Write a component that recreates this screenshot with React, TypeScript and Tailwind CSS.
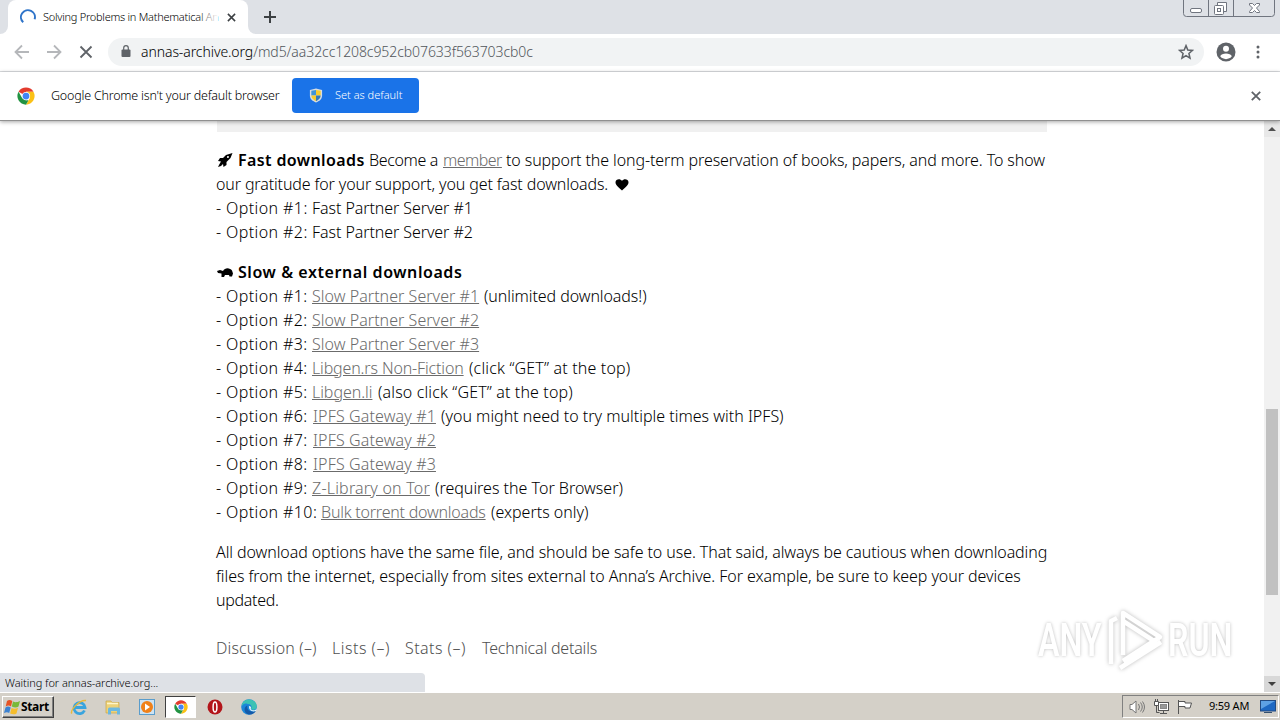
import React from "react";

interface DownloadOption {
  label: string;
  link: string;
  note?: string;
  labelClass: string;
  linkClass: string;
  noteClass?: string;
}

const slowOptions: DownloadOption[] = [
  { label: "- Option #1:", link: "Slow Partner Server #1", note: "(unlimited downloads!)", labelClass: "w-24", linkClass: "w-[167px] tracking-[0.04px]", noteClass: "tracking-[-0.08px]" },
  { label: "- Option #2:", link: "Slow Partner Server #2", labelClass: "w-24", linkClass: "w-[167px] tracking-[0.04px]" },
  { label: "- Option #3:", link: "Slow Partner Server #3", labelClass: "w-24", linkClass: "w-[167px] tracking-[0.04px]" },
  { label: "- Option #4:", link: "Libgen.rs Non-Fiction", note: "(click “GET” at the top)", labelClass: "w-24", linkClass: "w-[152px] tracking-[-0.15px]", noteClass: "tracking-[0.17px]" },
  { label: "- Option #5:", link: "Libgen.li", note: "(also click “GET” at the top)", labelClass: "w-24", linkClass: "w-[61px] tracking-[-0.05px]", noteClass: "tracking-[0.14px]" },
  { label: "- Option #6:", link: "IPFS Gateway #1", note: "(you might need to try multiple times with IPFS)", labelClass: "w-[97px]", linkClass: "w-[123px] tracking-[0.13px]" },
  { label: "- Option #7:", link: "IPFS Gateway #2", labelClass: "w-[97px]", linkClass: "w-[123px] tracking-[0.13px]" },
  { label: "- Option #8:", link: "IPFS Gateway #3", labelClass: "w-[97px]", linkClass: "w-[123px] tracking-[0.13px]" },
  { label: "- Option #9:", link: "Z-Library on Tor", note: "(requires the Tor Browser)", labelClass: "w-24", linkClass: "w-[118px] tracking-[0.2px]" },
  { label: "- Option #10:", link: "Bulk torrent downloads", note: "(experts only)", labelClass: "w-[105px]", linkClass: "w-[165px] tracking-[-0.22px]" },
];

const fastOptions = ["1", "2"];

function ChromeLogo({ className }: { className: string }) {
  return (
    <svg viewBox="0 0 48 48" className={className}>
      <circle cx="24" cy="24" r="23" fill="#fff" />
      <path d="M24 24 4.1 12.5A23 23 0 0 1 43.9 12.5H24Z" fill="#e33b2e" />
      <path d="M24 12.5h19.9A23 23 0 0 1 24 47l10-17.300Z" fill="#fbc116" />
      <path d="M4.100 12.500 14 29.700 24 35.500h6.600L24 47A23 23 0 0 1 4.100 12.500Z" fill="#229342" />
      <circle cx="24" cy="24" r="11" fill="#fff" />
      <circle cx="24" cy="24" r="9" fill="#4285f4" />
    </svg>
  );
}

function TabStrip() {
  return (
    <div className="flex h-[34px] items-start bg-[#dee1e6]">
      <div className="h-[34px] w-2 bg-white">
        <div className="h-full w-full rounded-br-lg bg-[#dee1e6]" />
      </div>
      <div className="flex h-[34px] w-[240px] items-center rounded-t-lg bg-white pl-3">
        <svg viewBox="0 0 16 16" className="h-4 w-4 shrink-0" fill="none">
          <path d="M3.200 13.300A7 7 0 1 1 14.600 10.300" stroke="#2f74c9" strokeWidth="2" />
        </svg>
        <div className="relative ml-[7px] flex w-[175px] text-[11px] tracking-[-0.26px] whitespace-nowrap text-black">
          Solving Problems in Mathematical An
          <div className="absolute inset-y-0 right-0 w-5 bg-gradient-to-r from-transparent to-white" />
        </div>
        <svg viewBox="0 0 10 10" className="ml-[9px] h-[9px] w-[9px]" stroke="#3c4043" strokeWidth="1.700">
          <path d="m1 1 8 8M9 1 1 9" />
        </svg>
      </div>
      <div className="h-[34px] w-2 bg-white">
        <div className="h-full w-full rounded-bl-lg bg-[#dee1e6]" />
      </div>
      <svg viewBox="0 0 12 12" className="mt-[11px] ml-2 h-3 w-3" stroke="#3c4043" strokeWidth="2">
        <path d="M6 0v12M0 6h12" />
      </svg>
      <svg viewBox="0 0 94 18" className="ml-auto mr-1 h-[18px] w-[94px]" fill="none" stroke="#70757f">
        <path d="M1.500 0v13.500a3 3 0 0 0 3 3h85a3 3 0 0 0 3-3V0M26.500 0v16M51.500 0v16" />
        <rect x="8.500" y="8.500" width="11" height="4" rx="1.500" fill="#fff" />
        <path d="M35.500 5.500v-3h9v9h-3" fill="#fff" />
        <rect x="32.500" y="5.500" width="9" height="9" rx="1" fill="#fff" />
        <rect x="35.500" y="8.500" width="3" height="3" />
        <path d="M67.500 3.500h3l2 2 2-2h3v1.500L74.500 8l3 3.500v1h-3l-2-2-2 2h-3v-1l3-3.500-3-3Z" fill="#fff" />
      </svg>
    </div>
  );
}

function Toolbar() {
  return (
    <div className="flex h-[38px] items-center border-b border-[#dcdee1] bg-white pb-0.5">
      <svg viewBox="0 0 16 16" className="ml-[14px] h-4 w-4" fill="none" stroke="#b5b7ba" strokeWidth="1.800">
        <path d="M15 8H2M8 1.500 1.500 8 8 14.500" />
      </svg>
      <svg viewBox="0 0 16 16" className="ml-4 h-4 w-4" fill="none" stroke="#b5b7ba" strokeWidth="1.800">
        <path d="M1 8h13M8 1.500 14.500 8 8 14.500" />
      </svg>
      <svg viewBox="0 0 14 14" className="ml-[17px] h-[14px] w-[14px]" stroke="#5f6368" strokeWidth="1.800">
        <path d="m1.500 1.500 11 11M12.500 1.500l-11 11" />
      </svg>
      <div className="ml-[15px] flex h-7 w-[1096px] items-center rounded-full bg-[#f1f3f4] pr-[10px] pl-[13px]">
        <svg viewBox="0 0 10 13" className="h-[13px] w-[10px]">
          <rect x="0.500" y="4.500" width="9" height="7.500" rx="1" fill="#5f6368" />
          <path d="M2.700 5V3a2.300 2.300 0 0 1 4.600 0v2" fill="none" stroke="#5f6368" strokeWidth="1.200" />
        </svg>
        <div className="ml-[10px] text-[14px] leading-5 tracking-[-0.08px] whitespace-nowrap text-[#50555a]">
          <span className="text-black">annas-archive.org</span>/md5/aa32cc1208c952cb07633f563703cb0c
        </div>
        <svg viewBox="0 0 24 24" className="ml-auto h-4 w-4" fill="none" stroke="#5f6368" strokeWidth="2.300">
          <path d="m12 2.500 2.700 6.500 7 .6-5.300 4.600 1.600 6.900-6-3.700-6 3.700 1.600-6.900L2.300 9.600l7-.6Z" />
        </svg>
      </div>
      <svg viewBox="0 0 20 20" className="ml-3 h-5 w-5">
        <circle cx="10" cy="10" r="9.500" fill="#5f6368" />
        <circle cx="10" cy="6.800" r="3" fill="#fff" />
        <path d="M4.200 14.200c1.200-3.600 10.400-3.600 11.600 0a7.200 7.200 0 0 1-11.600 0Z" fill="#fff" />
      </svg>
      <svg viewBox="0 0 4 14" className="ml-5 h-[14px] w-1" fill="#5f6368">
        <circle cx="2" cy="2" r="1.500" />
        <circle cx="2" cy="7" r="1.500" />
        <circle cx="2" cy="12" r="1.500" />
      </svg>
    </div>
  );
}

function DefaultBrowserBar() {
  return (
    <div className="relative z-10 flex h-[49px] items-center border-b border-[#909090] bg-white pb-px shadow-[0_1px_4px_rgba(0,0,0,0.35)]">
      <ChromeLogo className="ml-[17px] h-[18px] w-[18px]" />
      <span className="ml-4 w-[241px] pt-px text-[12.500px] tracking-[-0.21px] whitespace-nowrap text-black">
        Google Chrome isn't your default browser
      </span>
      <button className="flex h-[35px] w-[127px] items-center rounded-[4px] bg-[#1a73e8] pl-[17px] text-[11px] whitespace-nowrap text-white">
        <svg viewBox="0 0 14 16" className="h-[15px] w-[14px]">
          <path d="M7 .5 13.500 2v6c0 4-3 6-6.500 7.500C3.500 14 .5 12 .5 8V2Z" fill="#d7dde2" />
          <path d="M7 2v6H2V3Z" fill="#3f94d9" />
          <path d="M7 2v6h5V3Z" fill="#f7cb2d" />
          <path d="M2 8h5v6C4 12.500 2 11 2 8Z" fill="#f7cb2d" />
          <path d="M12 8H7v6c3-1.500 5-3 5-6Z" fill="#3479b8" />
        </svg>
        <span className="ml-3">Set as default</span>
      </button>
      <svg viewBox="0 0 10 10" className="ml-auto mr-[19px] h-[10px] w-[10px]" stroke="#5f6368" strokeWidth="1.800">
        <path d="m.8.8 8.400 8.400M9.200.8.8 9.200" />
      </svg>
    </div>
  );
}

function Watermark() {
  return (
    <div className="absolute top-[483px] left-[1038px] flex h-[72px] w-[200px] items-center font-['Roboto'] text-[46px] font-semibold text-white [text-shadow:0_0_4px_#bbb]">
      <span className="w-[66px] origin-left scale-x-[.7]">ANY</span>
      <svg viewBox="0 0 62 66" className="h-[66px] w-[62px] shrink-0 overflow-visible drop-shadow-[0_0_2px_#bbb]" fill="none" stroke="#fff" strokeWidth="4.500" strokeLinejoin="round">
        <path d="M19 48V6l37 24-37 24M13 11l-6 3v43M16 61l41-26M19 14l31 20" />
      </svg>
      <span className="ml-0.5 origin-left scale-x-[.7]">RUN</span>
    </div>
  );
}

function PageContent() {
  return (
    <div className="relative flex h-[571px] overflow-hidden bg-white">
      <main className="w-[1264px] pl-[216px] text-[16px] leading-6 whitespace-nowrap text-black">
        <div className="ml-px h-[11px] w-[830px] bg-[#f0f0f0]" />
        <div className="mt-4">
          <div className="flex items-center">
            <svg viewBox="0 0 16 16" className="mr-[5px] ml-px h-4 w-4" fill="#000">
              <path d="M15.500 1 9 3 6 6H3L1 9l3 .5L2.500 12 1 15l3-1 2-2 .5 3 3-2v-3l4-4ZM11 4a1 1 0 1 1-.1 2A1 1 0 0 1 11 4Z" fillRule="evenodd" />
            </svg>
            <b className="w-[131px] font-semibold tracking-[0.39px]">Fast downloads</b>
            <span className="w-[74px] tracking-[-0.35px]">Become a</span>
            <a className="w-[59px] tracking-[-0.55px] text-[#6b6b6b] underline">member</a>
            <span className="ml-1 tracking-[-0.1px]">to support the long-term preservation of books, papers, and more. To show</span>
          </div>
          <div className="flex items-center">
            <span className="w-[398px] tracking-[-0.13px]">our gratitude for your support, you get fast downloads.</span>
            <svg viewBox="0 0 16 14" className="h-[13px] w-4" fill="#000">
              <path d="M8 13.500C5 10 1 8 1 4.500 1 1 6 0 8 3c2-3 7-2 7 1.500C15 8 11 10 8 13.500Z" />
            </svg>
          </div>
          {fastOptions.map((n) => (
            <div key={n} className="flex">
              <span className="w-24 tracking-[0.4px]">- Option #{n}:</span>
              <span className="tracking-[-0.08px]">Fast Partner Server #{n}</span>
            </div>
          ))}
        </div>
        <div className="mt-4">
          <div className="flex items-center">
            <svg viewBox="0 0 16 12" className="mr-[5px] ml-px h-3 w-4" fill="#000">
              <path d="M0 5 3 4l3 1c2-4 7-3.500 9-.5l1 3-1 3h-2.500L12 9H8l-1 2H4.500V7.500L1 7Z" />
            </svg>
            <b className="font-semibold tracking-[0.57px]">Slow &amp; external downloads</b>
          </div>
          {slowOptions.map((option) => (
            <div key={option.label} className="flex">
              <span className={`${option.labelClass} tracking-[0.4px]`}>{option.label}</span>
              <a className={`${option.linkClass} text-[#6b6b6b] underline`}>{option.link}</a>
              {option.note && <span className={`ml-[5px] ${option.noteClass ?? ""}`}>{option.note}</span>}
            </div>
          ))}
        </div>
        <div className="mt-4">
          <div className="tracking-[-0.085px]">All download options have the same file, and should be safe to use. That said, always be cautious when downloading</div>
          <div className="tracking-[-0.075px]">files from the internet, especially from sites external to Anna’s Archive. For example, be sure to keep your devices</div>
          <div className="tracking-[-0.3px]">updated.</div>
        </div>
        <div className="mt-6 flex text-[#505050]">
          <span className="w-[116px] tracking-[0.15px]">Discussion (–)</span>
          <span className="w-[73px] tracking-[0.5px]">Lists (–)</span>
          <span className="w-[77px] tracking-[0.45px]">Stats (–)</span>
          <span className="tracking-[-0.18px]">Technical details</span>
        </div>
      </main>
      <div className="flex w-4 flex-col items-center bg-[#f1f1f1]">
        <svg viewBox="0 0 16 16" className="h-4 w-4 bg-[#e8e8e8]">
          <path d="m4 10 4-4 4 4Z" fill="#505050" />
        </svg>
        <div className="mt-[272px] h-[186px] w-3 bg-[#c1c1c1]" />
        <svg viewBox="0 0 16 16" className="mt-auto h-4 w-4 bg-[#d8d8d8]">
          <path d="m4 6 4 4 4-4Z" fill="#404040" />
        </svg>
      </div>
      <Watermark />
      <div className="absolute bottom-0 left-0 h-[19px] w-[425px] rounded-tr-[4px] bg-[#dee1e6] pl-[5px] text-[11px] leading-[19px] tracking-[-0.05px] text-black">
        Waiting for annas-archive.org...
      </div>
    </div>
  );
}

function Taskbar() {
  return (
    <div className="flex h-7 items-center border-t border-white bg-[#d4d0c8]">
      <button className="ml-[2px] flex h-[22px] w-[52px] items-center border border-t-white border-r-[#404040] border-b-[#404040] border-l-white pl-px text-[12px] font-bold text-black shadow-[inset_-1px_-1px_#808080]">
        <svg viewBox="0 0 16 16" className="mr-px h-4 w-4 shrink-0">
          <path d="M3 2c2-1.500 3.500-1 5.300 0L7 7.500c-1.500-1-3-1.500-5.300 0Z" fill="#e65324" />
          <path d="M9 2.500c2 1 4 1 7-.5l-1.500 5.500c-2 1.500-4.500 1-6.700 0Z" fill="#79b938" />
          <path d="M1.500 8.500c2-1.500 3.500-1 5.200 0L5.200 14c-1.500-1-3-1-5.200 0Z" fill="#3c82d1" />
          <path d="M7.600 9c2 1 4 1 6.400-.2L12.500 14.500c-2 1.200-4 1-6.400 0Z" fill="#f5bd2c" />
        </svg>
        <span className="tracking-[-0.030em]">Start</span>
      </button>
      <svg viewBox="0 0 18 18" className="ml-4 h-[18px] w-[18px]" fill="none">
        <path d="M14.500 12.500A5.500 5.500 0 1 1 15 9.500H5" stroke="#39a4de" strokeWidth="2.800" />
        <path d="M2 15.500c-3-2 7-14 14-13" stroke="#e8b93a" strokeWidth="1.400" />
      </svg>
      <svg viewBox="0 0 18 18" className="ml-4 h-[18px] w-[18px]">
        <path d="M2 3h5l1 1.500h7V15H2Z" fill="#edd279" stroke="#c9a849" strokeWidth=".7" />
        <path d="M3 5.500h11" stroke="#fff6c9" strokeWidth="1.500" />
        <path d="M4 16.500V11q0-1.500 1.500-1.500h9q1.500 0 1.500 1.500v5.500h-3V13H7v3.500Z" fill="#6cb8e0" />
      </svg>
      <svg viewBox="0 0 16 16" className="ml-[17px] h-4 w-4">
        <rect x=".5" y=".5" width="15" height="15" fill="#cde3f3" stroke="#5a9dcc" />
        <circle cx="8" cy="8" r="6" fill="#f08119" />
        <path d="m6 4.500 5 3.500-5 3.500Z" fill="#fff" />
      </svg>
      <div className="ml-[10px] flex h-[22px] w-[31px] items-center justify-center border border-t-[#404040] border-r-white border-b-white border-l-[#404040] bg-white">
        <ChromeLogo className="h-[14px] w-[14px]" />
      </div>
      <svg viewBox="0 0 16 16" className="ml-[11px] h-4 w-4">
        <circle cx="8" cy="8" r="7.500" fill="#b3151a" />
        <ellipse cx="8" cy="8" rx="1.900" ry="5" fill="#b3151a" stroke="#fff" strokeWidth="1.500" />
      </svg>
      <svg viewBox="0 0 16 16" className="ml-[18px] h-4 w-4">
        <circle cx="8" cy="8" r="7.800" fill="#1b86d8" />
        <path d="M1 5C4-2 16-.5 15.800 8c-.8 3-4 3.500-6 2 2-2 0-5.500-3-5C4 4 2 5 1 7Z" fill="#3cc2b4" />
        <path d="M6.500 6.500c-1 3 1 6 5 6 1.500 0 3-.5 3.500-1-2 4-7 5.500-10 2.500-2.500-2.500-1.500-7 1.500-7.500Z" fill="#1459a8" />
        <path d="M8 7c2 0 2.500 2 1.500 3 2 2 5 1.500 6.300-.5l-.7 2.400c-4 1.600-7.600-.8-7.100-4.900Z" fill="#e5f5fa" />
      </svg>
      <div className="ml-auto mr-px flex h-[23px] w-[157px] items-center border border-t-[#808080] border-r-white border-b-white border-l-[#808080] pl-[6px]">
        <svg viewBox="0 0 16 16" className="h-4 w-4" fill="none" stroke="#777">
          <path d="M1 5.500h2L7 2v12l-4-3.500H1Z" fill="#fff" />
          <path d="M9.500 5q2 3 0 6M11.500 3.500q3.500 4.500 0 9M13.500 2.500q4 5.500 0 11" />
        </svg>
        <svg viewBox="0 0 16 16" className="ml-2 h-4 w-4" fill="none" stroke="#555">
          <rect x="5.500" y="3.500" width="10" height="8" fill="#fff" />
          <rect x="7.500" y="5.500" width="6" height="4" fill="#999" stroke="#888" />
          <path d="M1.500 2.500h4v4h-4Z" fill="#fff" />
          <path d="M2.500 0v2M4.500 0v2M3.500 7v6.500h3M7 14.500h7M10.500 12v2" />
        </svg>
        <svg viewBox="0 0 16 16" className="ml-2 h-4 w-4" fill="#fff" stroke="#555">
          <path d="M1.500 1v14M2 2.500h6v1.500h6.500L13 9H8V7.500H2" />
        </svg>
        <span className="ml-4 w-[41px] text-[11px] font-normal tracking-[-0.020em] whitespace-nowrap text-black">9:59 AM</span>
        <svg viewBox="0 0 16 14" className="ml-[10px] h-[14px] w-4 shrink-0">
          <rect x=".5" y=".5" width="15" height="10.500" fill="#1e68c2" stroke="#234b82" />
          <path d="M1 1h14L1 9Z" fill="#5ea1e4" />
          <path d="M4 12.500h8" stroke="#34506f" />
        </svg>
      </div>
    </div>
  );
}

export default function App() {
  return (
    <div className="h-[720px] w-[1280px] overflow-hidden bg-white font-['Noto_Sans',sans-serif] font-light">
      <TabStrip />
      <Toolbar />
      <DefaultBrowserBar />
      <PageContent />
      <Taskbar />
    </div>
  );
}
